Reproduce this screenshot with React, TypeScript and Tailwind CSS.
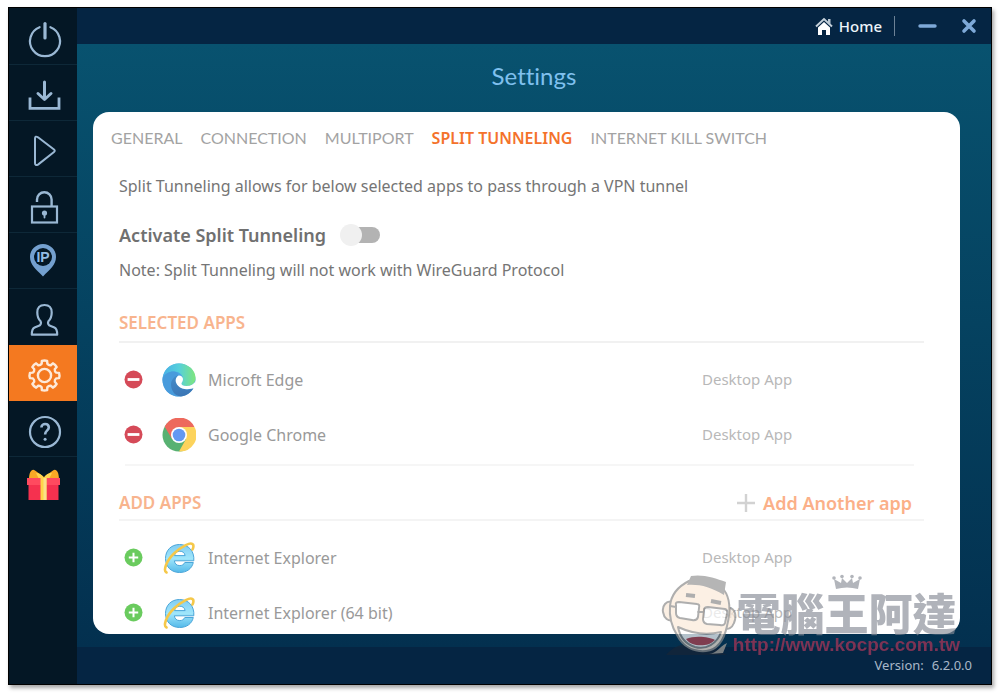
import type { ReactNode } from "react";

const gearPath = (() => {
  const points: string[] = [];
  const teeth = 8;
  for (let i = 0; i < teeth; i++) {
    const mid = (i * 2 * Math.PI) / teeth - Math.PI / 2;
    const at = (r: number, a: number) =>
      `${(18.5 + r * Math.cos(mid + a)).toFixed(2)} ${(18.5 + r * Math.sin(mid + a)).toFixed(2)}`;
    points.push(`${i === 0 ? "M" : "L"}${at(12, -0.24)}`);
    points.push(`L${at(14.8, -0.18)}`);
    points.push(`Q${at(15.4, 0)} ${at(14.8, 0.18)}`);
    points.push(`L${at(12, 0.24)}`);
    points.push(`Q${at(10.8, 0.3927)} ${at(12, 0.5454)}`);
  }
  return points.join("") + "Z";
})();

function Glyph({ children }: { children: ReactNode }) {
  return (
    <svg
      viewBox="0 0 36 36"
      className="size-9 overflow-visible"
      fill="none"
      stroke="currentColor"
      strokeWidth="2.2"
      strokeLinecap="round"
      strokeLinejoin="round"
      aria-hidden="true"
    >
      {children}
    </svg>
  );
}

const navItems: { label: string; active?: boolean; line?: boolean; icon: ReactNode }[] = [
  {
    label: "Power",
    line: true,
    icon: (
      <Glyph>
        <path d="M13.6 6.2A15 15 0 1 0 24.4 6.2" />
        <path d="M19 2.5V17" strokeWidth="3.2" />
      </Glyph>
    ),
  },
  {
    label: "Downloads",
    line: true,
    icon: (
      <Glyph>
        <path d="M4 20.5V31.3H33V20.5" strokeWidth="2.8" strokeLinecap="butt" strokeLinejoin="miter" />
        <path d="M18.5 5V22M12 16.5L18.5 22.5L25 16.5" strokeWidth="3" />
      </Glyph>
    ),
  },
  {
    label: "Play",
    line: true,
    icon: (
      <Glyph>
        <path d="M9 5.5Q9 2.5 12 4.3L28 16.5Q29.5 17.8 28 19L12 31.6Q9 33 9 30Z" strokeWidth="2" />
      </Glyph>
    ),
  },
  {
    label: "Security",
    line: true,
    icon: (
      <Glyph>
        <rect x="6" y="17.5" width="25" height="16" strokeLinejoin="miter" />
        <path d="M11 13V10.5A7.3 7.3 0 0 1 25.6 10.5V17" strokeWidth="2.4" strokeLinecap="butt" />
        <circle cx="18.5" cy="24" r="2.6" fill="currentColor" stroke="none" />
        <path d="M18.5 24V28.5" strokeWidth="1.8" />
      </Glyph>
    ),
  },
  {
    label: "IP address",
    line: true,
    icon: (
      <Glyph>
        <path
          d="M17 -1A13 13 0 0 0 4 12C4 20 10 24 17 31.5C24 24 30 20 30 12A13 13 0 0 0 17 -1Z"
          fill="#74a0cf"
          stroke="none"
        />
        <circle cx="17" cy="12" r="9" fill="#041725" stroke="none" />
        <text
          x="17"
          y="17"
          textAnchor="middle"
          fontSize="14"
          fontWeight="700"
          fontFamily="Liberation Sans, sans-serif"
          fill="#93bce4"
          stroke="none"
        >
          IP
        </text>
      </Glyph>
    ),
  },
  {
    label: "Account",
    icon: (
      <Glyph>
        <path d="M18.5 4C14 4 11.3 6.6 11.3 11.5C11.3 15.4 12.7 18.5 14.6 20.3C15.6 22.5 14.5 24.2 12.3 25L8.6 26.5C6.3 27.5 5.8 29.5 5.8 33.7H31.2C31.2 29.5 30.7 27.5 28.4 26.5L24.7 25C22.5 24.2 21.4 22.5 22.4 20.3C24.3 18.5 25.7 15.4 25.7 11.5C25.7 6.6 23 4 18.5 4Z" />
      </Glyph>
    ),
  },
  {
    label: "Settings",
    active: true,
    icon: (
      <Glyph>
        <path d={gearPath} strokeWidth="2.4" />
        <circle cx="18.5" cy="18.5" r="6.6" strokeWidth="2.4" />
      </Glyph>
    ),
  },
  {
    label: "Help",
    line: true,
    icon: (
      <Glyph>
        <circle cx="19" cy="19" r="15" />
        <path d="M15.4 14.5C15.4 9.9 22.8 9.9 22.8 14.5C22.8 17.5 19.1 17.3 19.1 21.6" strokeWidth="2.6" strokeLinecap="butt" />
        <circle cx="19.1" cy="26.2" r="1.5" fill="currentColor" stroke="none" />
      </Glyph>
    ),
  },
  {
    label: "Rewards",
    icon: (
      <Glyph>
        <g stroke="none">
          <path d="M3 10C3 3 6 -1 9 1.5L18 8V11H3ZM33 10C33 3 30 -1 27 1.5L18 8V11H33Z" fill="#f9a825" />
          <path d="M10 4Q15 4 18 9Q20 4 26 4L23 10H13Z" fill="#ffd54f" />
          <path d="M2.5 15H32.5V31H2.5Z" fill="#f5314f" />
          <path d="M1 9H34V16H1Z" fill="#ff4a5f" />
          <path d="M14.5 9H20.5V31H14.5Z" fill="#ffd54a" />
          <path d="M17.5 9H20.5V31H17.5Z" fill="#fbe08a" />
        </g>
      </Glyph>
    ),
  },
];

function Sidebar() {
  return (
    <nav className="w-17 shrink-0 bg-[#041725] pt-px" aria-label="Main">
      {navItems.map((item) => (
        <button
          key={item.label}
          type="button"
          aria-label={item.label}
          className={`grid h-14 w-full place-items-center border-b pt-1 pl-0.5 ${
            item.active ? "border-[#f47920] bg-[#f47920] text-[#fde9d8]" : "text-[#9ab8d4]"
          } ${item.line ? "border-[#0e2838]" : item.active ? "" : "border-transparent"}`}
        >
          {item.icon}
        </button>
      ))}
    </nav>
  );
}

function EdgeIcon() {
  return (
    <svg viewBox="0 0 34 34" className="size-[34px] opacity-80" aria-hidden="true">
      <defs>
        <linearGradient id="edge-top" x1="0" y1="0.4" x2="1" y2="0.4">
          <stop offset="0" stopColor="#1b9de2" />
          <stop offset="0.5" stopColor="#2cc5d2" />
          <stop offset="1" stopColor="#5fe05c" />
        </linearGradient>
        <linearGradient id="edge-side" x1="0" y1="0" x2="0.3" y2="1">
          <stop offset="0" stopColor="#1470bd" />
          <stop offset="1" stopColor="#0c56a5" />
        </linearGradient>
      </defs>
      <circle cx="17" cy="17" r="16.5" fill="#1c8fdc" />
      <path
        d="M0.6 15C2 6 8.5 0.5 17 0.5C26.5 0.5 33.5 7.5 33.5 15C33.5 20.5 29 23 24.5 23C21 23 19.5 21.8 19.5 20.6C19.5 19.6 21 18.8 21 16C21 12 17 8.5 12 8.5C6.5 8.5 2.5 11 0.6 15Z"
        fill="url(#edge-top)"
      />
      <path
        d="M11.5 8.5C7 8.5 2.6 11 0.6 15C-0.5 24 6 33.5 17 33.5C13 31 9.5 27 9.5 21.5C9.5 17 12 14 16.5 12.5C16 10 14 8.5 11.5 8.5Z"
        fill="#1b83d4"
      />
      <path
        d="M16 12.5C11.5 13.5 9 17.5 9 21.5C9 28.5 14 33.5 19 33.5C25 33 29.5 29 31.4 25.3C28 27 20.5 27.3 16.3 22.6C13.6 19.5 13 15 16 12.5Z"
        fill="url(#edge-side)"
      />
      <path
        d="M16.6 12.6C12.5 15 13 20 16.3 23C20.5 27.3 28 27 33.8 24V18C32 21 28.5 23 24.5 23C21 23 19.5 21.8 19.5 20.6C19.5 19.6 21 18.8 21 16C21 14.2 19 12.4 16.6 12.6Z"
        fill="#ffffff"
      />
    </svg>
  );
}

function ChromeIcon() {
  return (
    <svg viewBox="0 0 34 34" className="size-[34px] opacity-80" aria-hidden="true">
      <circle cx="17" cy="17" r="16.5" fill="#2f9e4f" />
      <path d="M17 17V9H32.4A16.5 16.5 0 0 1 17 33.5L24 21Z" fill="#fcc934" />
      <path d="M2.7 8.8A16.5 16.5 0 0 1 32.4 9H17L10 21Z" fill="#e94435" />
      <circle cx="17" cy="17" r="8" fill="#ffffff" />
      <circle cx="17" cy="17" r="6.3" fill="#3c7ff0" />
    </svg>
  );
}

function ExplorerIcon() {
  return (
    <svg viewBox="0 0 34 34" className="size-[34px] opacity-85" aria-hidden="true">
      <defs>
        <linearGradient id="explorer-blue" x1="0" y1="0" x2="0" y2="1">
          <stop offset="0" stopColor="#6cc4f0" />
          <stop offset="0.5" stopColor="#8fe2fb" />
          <stop offset="1" stopColor="#38aee6" />
        </linearGradient>
      </defs>
      <path
        d="M17.5 3.5C9 3.5 3.5 9.5 3.5 17.5C3.5 26 9.5 31.5 17.5 31.5C24.5 31.5 29.8 28 31.3 21.5H22.8C21.8 23.6 20 24.6 17.8 24.6C14.6 24.6 12.7 22.8 12.4 19.8H31.8C32.6 10 26.5 3.5 17.5 3.5ZM12.5 14.6C13 11.8 15 10.2 17.8 10.2C20.7 10.2 22.7 11.8 23.1 14.6Z"
        fill="url(#explorer-blue)"
        stroke="#2d97d3"
        strokeWidth="1"
      />
      <path
        d="M4.5 31.5C1 30 4 20 12 12.5C20 5 29 0.5 31 3.5C31.8 4.8 31.3 6.8 30.5 8.5"
        fill="none"
        stroke="#f4bf2a"
        strokeWidth="2.6"
        strokeLinecap="round"
      />
    </svg>
  );
}

type AppRowProps = { name: string; icon: ReactNode; action: "remove" | "add" };

function AppRow({ name, icon, action }: AppRowProps) {
  return (
    <li className="flex h-[55px] items-center pl-[5px]">
      <button
        type="button"
        aria-label={`${action === "add" ? "Add" : "Remove"} ${name}`}
        className="size-[19px] shrink-0"
      >
        <svg viewBox="0 0 19 19" className="size-[19px]" aria-hidden="true">
          <circle cx="9.5" cy="9.5" r="9" fill={action === "add" ? "#6acb5e" : "#d54a58"} />
          <path
            d={action === "add" ? "M4.8 9.5H14.2M9.5 4.8V14.2" : "M3.6 9.5H15.4"}
            stroke="#fff"
            strokeWidth={action === "add" ? 2 : 2.8}
          />
        </svg>
      </button>
      <span className="ml-[19px] shrink-0">{icon}</span>
      <span className="ml-3 flex-1 text-base text-[#999999]">{name}</span>
      <span className="w-[232px] text-[15px] text-[#b8b8b8]">Desktop App</span>
    </li>
  );
}

const tabs = ["GENERAL", "CONNECTION", "MULTIPORT", "SPLIT TUNNELING", "INTERNET KILL SWITCH"];

function SettingsCard() {
  return (
    <section className="mr-[31px] ml-4 min-h-0 flex-1 [scrollbar-width:none] overflow-y-auto rounded-2xl bg-white px-[26px]">
      <div role="tablist" className="-mx-2 flex h-[52px] items-center gap-[18px] whitespace-nowrap">
        {tabs.map((tab) => {
          const active = tab === "SPLIT TUNNELING";
          return (
            <button
              key={tab}
              type="button"
              role="tab"
              aria-selected={active}
              className={
                active
                  ? "text-base font-semibold text-[#f4722b]"
                  : "font-[Lato,sans-serif] text-base text-[#a3a3a3]"
              }
            >
              {tab}
            </button>
          );
        })}
      </div>

      <p className="mt-2.5 text-base leading-6 text-[#757575]">
        Split Tunneling allows for below selected apps to pass through a VPN tunnel
      </p>
      <div className="mt-5 flex h-[34px] items-center gap-3.5">
        <label htmlFor="split" className="text-lg font-semibold text-[#707070]">
          Activate Split Tunneling
        </label>
        <input
          id="split"
          type="checkbox"
          role="switch"
          className="grid h-[22px] w-10 appearance-none items-center before:col-start-1 before:row-start-1 before:ml-2 before:h-4 before:rounded-full before:bg-[#b3b3b3] after:col-start-1 after:row-start-1 after:size-[22px] after:rounded-full after:bg-[#f0f0f0] checked:after:justify-self-end"
        />
      </div>
      <p className="mt-1.5 text-base leading-6 text-[#757575]">
        Note: Split Tunneling will not work with WireGuard Protocol
      </p>

      <div className="mt-[29px] mr-[10px] border-b-2 border-[#f1f1f1] pb-1.5">
        <h2 className="text-[17px] leading-6 font-semibold text-[#f8b48e]">SELECTED APPS</h2>
      </div>
      <ul className="mt-[9px]">
        <AppRow name="Microft Edge" icon={<EdgeIcon />} action="remove" />
        <AppRow name="Google Chrome" icon={<ChromeIcon />} action="remove" />
      </ul>
      <hr className="mt-0.5 mr-5 ml-1.5 border-t-2 border-[#f6f6f6]" />

      <div className="mt-[25px] mr-[10px] flex justify-between border-b-2 border-[#f4f4f4] pr-3 pb-1">
        <h2 className="text-[17px] leading-6 font-semibold text-[#f8b48e]">ADD APPS</h2>
        <button type="button" className="flex items-center gap-2 text-lg leading-6 font-semibold text-[#fbb088]">
          <svg viewBox="0 0 18 18" className="size-[18px]" aria-hidden="true">
            <path d="M0 9H18M9 0V18" stroke="#d2d2d2" strokeWidth="2.4" />
          </svg>
          Add Another app
        </button>
      </div>
      <ul className="mt-[9px]">
        <AppRow name="Internet Explorer" icon={<ExplorerIcon />} action="add" />
        <AppRow name="Internet Explorer (64 bit)" icon={<ExplorerIcon />} action="add" />
      </ul>
    </section>
  );
}

function Watermark() {
  return (
    <div className="pointer-events-none absolute right-[34px] bottom-[29px] flex items-end">
      <svg viewBox="0 0 76 80" className="h-20 w-[76px] opacity-70" aria-hidden="true">
        <path d="M5 80C10 74 18 69 26 69L52 72C58 76 62 78 66 80Z" fill="#182638" />
        <path d="M48 79C56 78 58 72 66 68L62 78Z" fill="#aaa49c" />
        <g stroke="#8c8c8c" strokeWidth="2" strokeLinejoin="round" strokeLinecap="round">
          <path d="M12 27C5 25 1 31 2 37C3 43 7 47 13 45ZM68 33C74 33 76 41 73 48C71 53 67 55 64 53Z" fill="#fae9d8" />
          <path d="M28 6C16 12 10 20 9 31C8 42 11 52 16 60C22 72 33 77 45 76C56 75 63 65 66 51C70 35 69 23 63 15C54 5 40 2 28 6Z" fill="#fbead9" />
          <path d="M26 10L30 1C42 -1 54 3 65 7L63 20C50 12 38 9 26 10Z" fill="#969696" stroke="none" />
          <path d="M25 20L34 21M50 26L60 28" fill="none" strokeWidth="4" strokeLinecap="butt" />
          <path d="M17 52C32 59 47 60 60 57C56 69 45 75 34 72C24 69 19 62 17 52Z" fill="#ffffff" />
          <path d="M25 64C34 60 49 62 54 65C49 70 42 71 35 70C30 69 27 67 25 64Z" fill="#b64450" stroke="none" />
          <path d="M15 30Q14 27 18 27L36 29Q39 29 38 33L37 42Q36 46 31 45L19 43Q15 42 15 38ZM43 35Q43 32 47 32L64 34Q67 35 66 39L64 48Q63 51 59 50L46 49Q42 48 42 44ZM37 37H43M15 32L9 31" fill="#ffffff" />
        </g>
      </svg>
      <div className="-ml-px flex w-[221px] flex-col items-center whitespace-nowrap">
        <svg viewBox="0 0 30 16" className="h-4 w-[30px] opacity-50" aria-hidden="true">
          <g fill="#666c78">
            <path d="M2 5L9 9L10 4L15 9L20 4L21 9L28 5L26 15Q15 12 4 15Z" />
            <circle cx="2" cy="4" r="1.8" />
            <circle cx="10" cy="2.5" r="1.8" />
            <circle cx="20" cy="2.5" r="1.8" />
            <circle cx="28" cy="4" r="1.8" />
          </g>
        </svg>
        <p className="font-['Noto_Sans_CJK_TC',sans-serif] text-[44px] leading-[44px] font-black text-[#858b95]/65">
          電腦王阿達
        </p>
        <p className="mt-px font-['Liberation_Sans',sans-serif] text-[19px] leading-5 font-bold text-[#7d3354]">
          http://www.kocpc.com.tw
        </p>
      </div>
    </div>
  );
}

export default function App() {
  return (
    <div className="h-screen bg-white px-2 pt-[7px] pb-2 font-['Noto_Sans',sans-serif]">
      <div className="relative flex h-full border border-black bg-[#052543] shadow-[2px_3px_4px_rgba(0,0,0,0.35)]">
        <Sidebar />
        <div className="flex min-w-0 flex-1 flex-col">
          <header className="flex h-9 shrink-0 items-center justify-end pr-3.5">
            <a href="#home" className="flex items-center gap-1.5 text-[15px] font-medium text-[#eef4fa]">
              <svg viewBox="0 0 18 18" className="size-[18px]" aria-hidden="true">
                <path d="M13 2H15.5V7L13 5Z" fill="#b9c8d4" />
                <path d="M1 9.5L9 2L17 9.5" fill="none" stroke="#c4d0da" strokeWidth="2" />
                <path d="M9 5L15 10.5V18H11V13H7V18H3V10.5Z" fill="#ffffff" />
              </svg>
              Home
            </a>
            <span className="ml-3 h-5 w-px bg-[#6d8296]" />
            <button type="button" aria-label="Minimize" className="ml-[23px] text-[#7ea9d8]">
              <svg viewBox="0 0 19 14" className="h-3.5 w-[19px]" aria-hidden="true">
                <path d="M2 7H17" stroke="currentColor" strokeWidth="3.4" strokeLinecap="round" />
              </svg>
            </button>
            <button type="button" aria-label="Close" className="ml-6 text-[#7ea9d8]">
              <svg viewBox="0 0 16 16" className="size-4" aria-hidden="true">
                <path d="M3 3L13 13M13 3L3 13" stroke="currentColor" strokeWidth="3.6" strokeLinecap="round" />
              </svg>
            </button>
          </header>
          <main className="flex min-h-0 flex-1 flex-col bg-linear-to-b from-[#08526f] to-[#03304f] pb-[13px]">
            <h1 className="mb-1 grid h-16 shrink-0 place-items-center font-[Lato,sans-serif] text-2xl text-[#7fc0ee] [font-variant-ligatures:none]">
              Settings
            </h1>
            <SettingsCard />
          </main>
          <footer className="flex h-[37px] shrink-0 items-center justify-end gap-2 pr-[19px] text-[13px] text-[#a9b8c8]">
            <span>Version:</span>
            <span>6.2.0.0</span>
          </footer>
        </div>
        <Watermark />
      </div>
    </div>
  );
}
